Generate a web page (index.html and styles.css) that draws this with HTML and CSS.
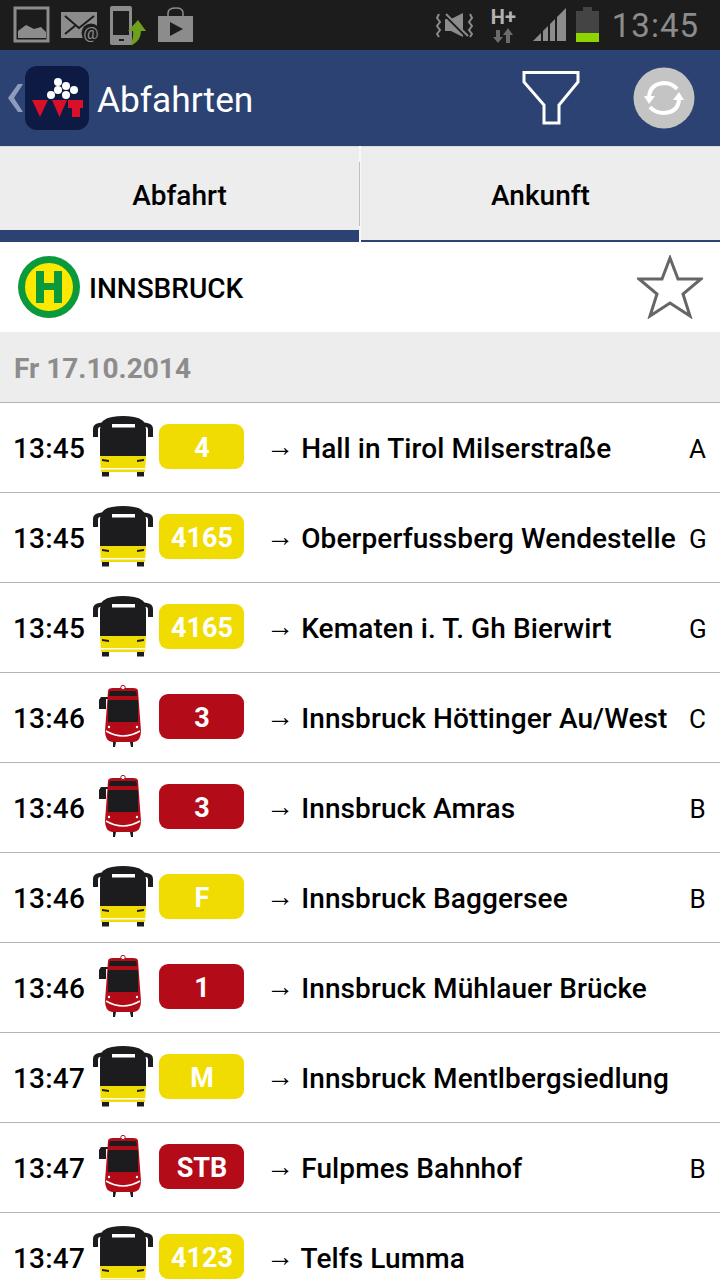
FILE: index.html
```html
<!DOCTYPE html>
<html>
<head>
    <meta charset="UTF-8">
    <title>Abfahrten</title>
    <link rel="stylesheet" href="styles.css">
</head>
<body>
    <svg class="defs" width="0" height="0">
        <symbol id="bus" viewBox="0 0 62 62">
            <path d="M1 22V14Q1 9 7 8L12 7V11L8 12Q6 12 6 15V22Z" fill="#1c1c1e"/>
            <path d="M61 22V14Q61 9 55 8L50 7V11L54 12Q56 12 56 15V22Z" fill="#1c1c1e"/>
            <path d="M8 14Q9 3 20 2Q31 0 42 2Q53 3 54 14V41H8Z" fill="#1c1c1e"/>
            <path d="M8 41H54L53 57H9Z" fill="#f0dc00"/>
            <rect x="20" y="9" width="23" height="3.500" fill="#fff"/>
            <path d="M10 44L17 45V47L10 46Z" fill="#1c1c1e"/>
            <path d="M52 44L45 45V47L52 46Z" fill="#1c1c1e"/>
            <rect x="9" y="53" width="44" height="1.500" fill="#fff"/>
            <rect x="10" y="57" width="7" height="4.500" fill="#1c1c1e"/>
            <rect x="45" y="57" width="7" height="4.500" fill="#1c1c1e"/>
        </symbol>
        <symbol id="tram" viewBox="0 0 62 62">
            <path d="M9 12H18V14H14V24H7V15Z" fill="#1c1c1e"/>
            <path d="M16 6Q16 3 21 3H41Q46 3 46 6L49 46Q49 56 42 57H20Q13 56 13 46Z" fill="#b30c18"/>
            <circle cx="31" cy="2.500" r="2.200" fill="#fff" stroke="#b30c18"/>
            <path d="M18 6H44L45 11H17Z" fill="#1c1c1e"/>
            <path d="M16 15H46V37H16Z" fill="#1c1c1e"/>
            <path d="M14 46Q31 56 48 46" fill="none" stroke="#fff" stroke-width="1.600"/>
            <circle cx="17" cy="42" r="1.200" fill="#fff"/>
            <circle cx="45" cy="42" r="1.200" fill="#fff"/>
            <path d="M21 57H24L23 62H21Z" fill="#1c1c1e"/>
            <path d="M38 57H41L41 62H39Z" fill="#1c1c1e"/>
        </symbol>
    </svg>

    <div class="statusbar">
        <div class="status-left">
            <svg width="38" height="38" viewBox="0 0 38 38"><rect x="2" y="2" width="33" height="33" fill="none" stroke="#8c8c8c" stroke-width="3"/><path d="M5 32V25L13 19L21 23L28 21L33 26V32Z" fill="#8c8c8c"/></svg>
            <svg width="40" height="38" viewBox="0 0 40 38"><rect x="0" y="6" width="36" height="26" fill="#8c8c8c"/><path d="M4 10L18 22L33 10M4 28L15 19" fill="none" stroke="#1c1c1c" stroke-width="2"/><circle cx="30" cy="27" r="9.500" fill="#1c1c1c"/><text x="30" y="33" class="at">@</text></svg>
            <svg class="status-phone" width="38" height="40" viewBox="0 0 38 40"><path d="M1 3Q1 1 3 1H21Q23 1 23 3V40H3Q1 40 1 38Z" fill="#8c8c8c"/><rect x="4" y="6" width="16" height="24" fill="#1c1c1c"/><rect x="10" y="34" width="5" height="2" fill="#1c1c1c"/><path d="M18 42Q25 38 24 26H19L29 15L37 26H32Q32 38 18 42Z" fill="#6ea01e"/></svg>
            <svg class="status-play" width="36" height="36" viewBox="0 0 36 36"><path d="M0 9H35V35H0Z" fill="#8c8c8c"/><path d="M10 9V6Q10 1 18 1Q25 1 25 6V9" fill="none" stroke="#8c8c8c" stroke-width="1.500"/><path d="M12 15L25 22L12 29Z" fill="#1c1c1c"/></svg>
        </div>
        <div class="status-right">
            <svg width="37" height="26" viewBox="0 0 37 26"><path d="M9 7H15L27 1V25L15 19H9Z" fill="#8c8c8c"/><path d="M8 2L30 24" stroke="#1c1c1c" stroke-width="3"/><path d="M10 2L32 24" stroke="#8c8c8c" stroke-width="2"/><path d="M3 2L1 6L4 10L1 14L4 18L1 22L3 25M34 2L36 6L33 10L36 14L33 18L36 22L34 25" fill="none" stroke="#8c8c8c" stroke-width="2"/></svg>
            <div class="net"><span class="net-type">H+</span><svg width="20" height="15" viewBox="0 0 20 15"><path d="M3 2H7V9H10L5 15L0 9H3ZM13 15H17V7H20L15 0L10 7H13Z" fill="#6b6b6b"/></svg></div>
            <svg width="34" height="34" viewBox="0 0 34 34"><path d="M0 33L33 0V33Z" fill="#8c8c8c"/><path d="M9 18V33M16 12V33M23 5V33" stroke="#1c1c1c" stroke-width="2"/></svg>
            <div class="battery"><div class="battery-cap"></div><div class="battery-body"><div class="battery-level"></div></div></div>
            <span class="clock">13:45</span>
        </div>
    </div>

    <div class="appbar">
        <div class="appbar-left">
            <svg class="back" width="15" height="28" viewBox="0 0 15 28"><path d="M10 0H15L6 14L15 28H10L0 14Z" fill="#8d9cbd"/></svg>
            <svg width="64" height="64" viewBox="0 0 64 64"><rect width="64" height="64" rx="12" fill="#0d1a44"/><g fill="#fff"><circle cx="33" cy="16" r="4"/><circle cx="41" cy="20" r="4"/><circle cx="33" cy="24" r="4"/><circle cx="49" cy="24" r="4"/><circle cx="26" cy="29" r="4"/><circle cx="41" cy="29" r="4"/></g><g fill="#d8102a"><path d="M7 34H23L15 51Z"/><path d="M27 34H42L34.500 51Z"/><path d="M43 34H58V42H55V51H47V42H43Z"/></g></svg>
            <h1 class="title">Abfahrten</h1>
        </div>
        <div class="appbar-right">
            <svg width="58" height="56" viewBox="0 0 58 56"><path d="M2 2.500H56V12L37 35V53H22V35L2 12Z" fill="none" stroke="#fff" stroke-width="3"/></svg>
            <svg width="62" height="62" viewBox="0 0 62 62"><circle cx="31" cy="31" r="30.500" fill="#c4c4c4"/><path d="M16 30Q17 17 31 16Q39 16 44 22M46 33Q45 45 31 46Q22 46 17 40" fill="none" stroke="#fff" stroke-width="4"/><path d="M11 29H22L16 37ZM40 33H51L46 25Z" fill="#fff"/></svg>
        </div>
    </div>

    <div class="tabs">
        <div class="tab tab-active">Abfahrt</div>
        <div class="tab">Ankunft</div>
    </div>

    <div class="station">
        <div class="station-name">
            <svg width="64" height="64" viewBox="0 0 64 64"><circle cx="32" cy="32" r="31" fill="#0a9a3c"/><circle cx="32" cy="32" r="24" fill="#fde800"/><path d="M19 16H27V28H37V16H45V48H37V35H27V48H19Z" fill="#0a9a3c"/></svg>
            <span class="station-label">INNSBRUCK</span>
        </div>
        <svg width="66" height="64" viewBox="0 0 66 64"><path d="M33 3L41 24H64L46 39L53 61L33 48L13 61L20 39L2 24H25Z" fill="none" stroke="#666" stroke-width="3"/></svg>
    </div>

    <div class="date">Fr 17.10.2014</div>

    <div class="list">
        <div class="row">
            <span class="time">13:45</span>
            <svg class="vehicle"><use href="#bus"/></svg>
            <span class="line line-bus">4</span>
            <span class="dest"><span class="arrow">→</span> Hall in Tirol Milserstraße</span>
            <span class="stop">A</span>
        </div>
        <div class="row">
            <span class="time">13:45</span>
            <svg class="vehicle"><use href="#bus"/></svg>
            <span class="line line-bus">4165</span>
            <span class="dest"><span class="arrow">→</span> Oberperfussberg Wendestelle</span>
            <span class="stop">G</span>
        </div>
        <div class="row">
            <span class="time">13:45</span>
            <svg class="vehicle"><use href="#bus"/></svg>
            <span class="line line-bus">4165</span>
            <span class="dest"><span class="arrow">→</span> Kematen i. T. Gh Bierwirt</span>
            <span class="stop">G</span>
        </div>
        <div class="row">
            <span class="time">13:46</span>
            <svg class="vehicle"><use href="#tram"/></svg>
            <span class="line line-tram">3</span>
            <span class="dest"><span class="arrow">→</span> Innsbruck Höttinger Au/West</span>
            <span class="stop">C</span>
        </div>
        <div class="row">
            <span class="time">13:46</span>
            <svg class="vehicle"><use href="#tram"/></svg>
            <span class="line line-tram">3</span>
            <span class="dest"><span class="arrow">→</span> Innsbruck Amras</span>
            <span class="stop">B</span>
        </div>
        <div class="row">
            <span class="time">13:46</span>
            <svg class="vehicle"><use href="#bus"/></svg>
            <span class="line line-bus">F</span>
            <span class="dest"><span class="arrow">→</span> Innsbruck Baggersee</span>
            <span class="stop">B</span>
        </div>
        <div class="row">
            <span class="time">13:46</span>
            <svg class="vehicle"><use href="#tram"/></svg>
            <span class="line line-tram">1</span>
            <span class="dest"><span class="arrow">→</span> Innsbruck Mühlauer Brücke</span>
            <span class="stop"></span>
        </div>
        <div class="row">
            <span class="time">13:47</span>
            <svg class="vehicle"><use href="#bus"/></svg>
            <span class="line line-bus">M</span>
            <span class="dest"><span class="arrow">→</span> Innsbruck Mentlbergsiedlung</span>
            <span class="stop"></span>
        </div>
        <div class="row">
            <span class="time">13:47</span>
            <svg class="vehicle"><use href="#tram"/></svg>
            <span class="line line-tram">STB</span>
            <span class="dest"><span class="arrow">→</span> Fulpmes Bahnhof</span>
            <span class="stop">B</span>
        </div>
        <div class="row">
            <span class="time">13:47</span>
            <svg class="vehicle"><use href="#bus"/></svg>
            <span class="line line-bus">4123</span>
            <span class="dest"><span class="arrow">→</span> Telfs Lumma</span>
            <span class="stop"></span>
        </div>
    </div>
</body>
</html>
```

FILE: styles.css
```css
html, body {
    margin: 0;
    height: 1280px;
    overflow: hidden;
}
body {
    font-family: Roboto, "Liberation Sans", sans-serif;
    background-color: #fff;
    color: #000;
}
svg {
    display: block;
    flex: none;
}
.defs {
    position: absolute;
}
.at {
    font-size: 17px;
    fill: #8c8c8c;
    text-anchor: middle;
}
.statusbar {
    height: 50px;
    background-color: #1c1c1c;
    display: flex;
    justify-content: space-between;
    align-items: center;
    padding: 0 21px 0 13px;
    box-sizing: border-box;
}
.status-left {
    display: flex;
    align-items: center;
    gap: 10px;
}
.status-phone {
    margin-left: -2px;
}
.status-play {
    margin-left: 1px;
}
.status-right {
    display: flex;
    align-items: center;
}
.net {
    margin-left: 18px;
    margin-right: 17px;
    display: flex;
    flex-direction: column;
    align-items: center;
    margin-top: 2px;
    gap: 2px;
}
.net-type {
    font-size: 20px;
    line-height: 17px;
    font-weight: 700;
    color: #b4b4b4;
}
.battery {
    margin-left: 9px;
    margin-right: 13px;
    width: 23px;
    margin-top: -1px;
}
.battery-cap {
    width: 9px;
    height: 4px;
    margin: 0 auto;
    background-color: #444;
}
.battery-body {
    height: 31px;
    background-color: #444;
    display: flex;
    align-items: flex-end;
}
.battery-level {
    width: 100%;
    height: 9px;
    background-color: #8fd400;
}
.clock {
    font-size: 33px;
    color: #8c8c8c;
    letter-spacing: 1px;
}
.appbar {
    height: 96px;
    background-color: #2b4272;
    display: flex;
    justify-content: space-between;
    align-items: center;
    padding: 0 25px 0 8px;
    box-sizing: border-box;
}
.appbar-left {
    display: flex;
    align-items: center;
}
.back {
    margin-right: 2px;
}
.title {
    margin: 4px 0 0 8px;
    font-size: 35.3px;
    font-weight: 400;
    color: #fff;
}
.appbar-right {
    display: flex;
    align-items: center;
    gap: 53px;
}
.tabs {
    position: relative;
    display: flex;
    gap: 2px;
    height: 96px;
    background-color: #f8f8f8;
    box-sizing: border-box;
}
.tabs::after {
    content: "";
    position: absolute;
    left: 359px;
    top: 16px;
    width: 1px;
    height: 64px;
    background-color: #c0c0c0;
}
.tab {
    flex: 1;
    display: flex;
    align-items: center;
    justify-content: center;
    background-color: #ededed;
    border-top: 1px solid #dcdcdc;
    font-size: 28px;
    font-weight: 500;
    border-bottom: 2px solid #2b4272;
    box-sizing: border-box;
    padding-top: 4px;
}
.tab-active {
    border-bottom: 12px solid #2b4272;
    padding-top: 14px;
}
.station {
    height: 90px;
    display: flex;
    justify-content: space-between;
    align-items: center;
    padding: 0 17px;
}
.station-name {
    display: flex;
    align-items: center;
    gap: 8px;
    font-size: 28px;
    font-weight: 500;
}
.station-label {
    margin-top: 2px;
}
.date {
    height: 71px;
    box-sizing: border-box;
    background-color: #ededed;
    border-bottom: 1px solid #b4b4b4;
    padding: 0 14px;
    line-height: 74px;
    font-size: 28px;
    font-weight: 700;
    color: #8c8c8c;
}
.row {
    height: 90px;
    box-sizing: border-box;
    border-bottom: 1px solid #b4b4b4;
    display: flex;
    align-items: center;
    padding: 0 14px 2px 13px;
}
.time {
    width: 79px;
    padding-top: 4px;
    font-size: 28px;
    font-weight: 500;
    letter-spacing: 0.2px;
}
.vehicle {
    width: 62px;
    height: 62px;
    margin-bottom: 2px;
}
.line {
    width: 84px;
    height: 45px;
    margin-left: 5px;
    padding-left: 1px;
    border-radius: 9px;
    color: #fff;
    font-size: 27px;
    font-weight: 700;
    line-height: 49px;
    text-align: center;
}
.line-bus {
    background-color: #f0dc00;
}
.line-tram {
    background-color: #b30c18;
}
.dest {
    flex: 1;
    margin-left: 22px;
    padding-top: 4px;
    font-size: 28px;
    font-weight: 500;
    letter-spacing: 0.1px;
    white-space: nowrap;
}
.arrow {
    font-weight: 700;
    line-height: 0;
    vertical-align: 2px;
}
.stop {
    font-size: 26px;
    width: 17px;
    padding-top: 4px;
    text-align: center;
}
```
